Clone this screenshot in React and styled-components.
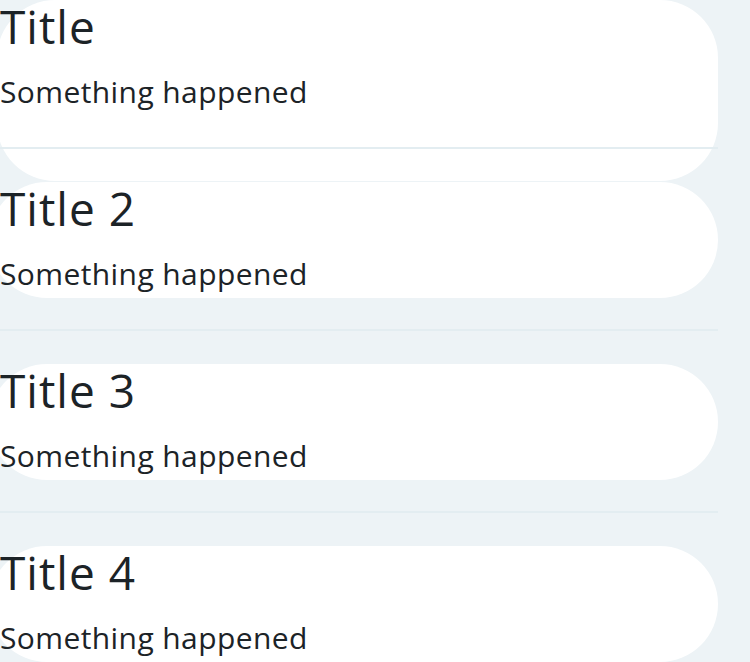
import React from "react";
import styled, { createGlobalStyle } from "styled-components";

const GlobalStyle = createGlobalStyle`
  html, body {
    margin: 0;
    padding: 0;
    background: #edf3f6;
    overflow: hidden;
  }
  body {
    font-family: "Open Sans", "Lato", sans-serif;
    color: #1c2327;
  }
`;

const items = [
  { title: "Title", text: "Something happened", pressed: true },
  { title: "Title 2", text: "Something happened" },
  { title: "Title 3", text: "Something happened" },
  { title: "Title 4", text: "Something happened" },
];

function App() {
  return (
    <>
      <GlobalStyle />
      <List>
        {items.map((item) => (
          <Item key={item.title}>
            <Card pressed={item.pressed} />
            <Content>
              <Title>{item.title}</Title>
              <Subtitle>{item.text}</Subtitle>
            </Content>
            <Divider />
          </Item>
        ))}
      </List>
    </>
  );
}

const List = styled.div`
  width: 750px;
  height: 662px;
  display: flex;
  flex-direction: column;
  overflow: hidden;
`;

const Item = styled.div`
  display: grid;
  flex-shrink: 0;
  height: 182px;
  width: 718px;

  & > * {
    grid-area: 1 / 1;
  }
`;

const Card = styled.div`
  align-self: start;
  margin-left: ${(p) => (p.pressed ? "-3px" : "-11px")};
  height: ${(p) => (p.pressed ? "181px" : "116px")};
  background: #ffffff;
  border-radius: 58px;
`;

const Content = styled.div`
  position: relative;
  align-self: start;
  display: flex;
  flex-direction: column;
`;

const Title = styled.div`
  font-size: 46px;
  line-height: 52px;
  font-weight: 400;
  letter-spacing: 1px;
`;

const Subtitle = styled.div`
  margin-top: 22px;
  font-size: 30px;
  line-height: 36px;
  letter-spacing: 0.4px;
`;

const Divider = styled.div`
  position: relative;
  align-self: start;
  margin-top: 147px;
  height: 2px;
  background: #e3edf1;
`;

export default App;
